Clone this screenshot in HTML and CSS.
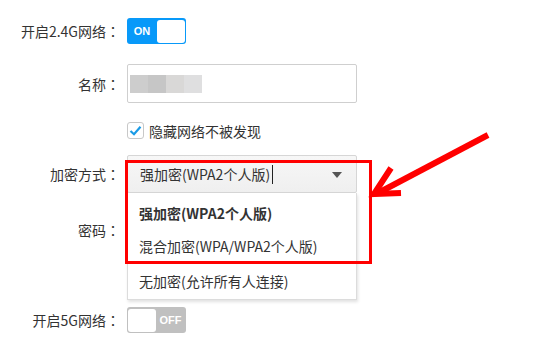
FILE: index.html
```html
<!DOCTYPE html>
<html lang="zh-CN">
<head>
    <meta charset="UTF-8">
    <meta name="viewport" content="width=device-width, initial-scale=1.0">
    <title>无线设置</title>
    <link rel="stylesheet" href="styles.css">
</head>
<body>
    <div class="page">
        <div class="form">
            <div class="row row-switch">
                <label class="label">开启2.4G网络<span class="colon" lang="zh-Hant">：</span></label>
                <span class="switch on"><span class="switch-text">ON</span><span class="knob"></span></span>
            </div>

            <div class="row row-name">
                <label class="label">名称<span class="colon" lang="zh-Hant">：</span></label>
                <div class="input">
                    <span class="blur b1"></span><span class="blur b2"></span><span class="blur b3"></span><span class="blur b4"></span>
                </div>
            </div>

            <div class="row row-check">
                <span class="label"></span>
                <span class="checkbox">
                    <svg width="13" height="11" viewBox="0 0 13 11"><path d="M1.5 6 L5 9.2 L11.5 1.8" fill="none" stroke="#1a9be6" stroke-width="2.2"/></svg>
                </span>
                <span class="check-text">隐藏网络不被发现</span>
            </div>

            <div class="row row-select">
                <label class="label">加密方式<span class="colon" lang="zh-Hant">：</span></label>
                <div class="select">
                    <span class="select-text">强加密(WPA2个人版)</span><span class="caret"></span>
                    <span class="triangle"></span>
                    <ul class="dropdown">
                        <li class="item selected i1">强加密(WPA2个人版)</li>
                        <li class="item i2">混合加密(WPA/WPA2个人版)</li>
                        <li class="item i3">无加密(允许所有人连接)</li>
                    </ul>
                </div>
            </div>

            <div class="row row-pass">
                <label class="label">密码<span class="colon" lang="zh-Hant">：</span></label>
            </div>

            <div class="row row-switch row-5g">
                <label class="label">开启5G网络<span class="colon" lang="zh-Hant">：</span></label>
                <span class="switch off"><span class="knob"></span><span class="switch-text">OFF</span></span>
            </div>
        </div>

        <!-- annotation -->
        <div class="mark-box"></div>
        <svg class="mark-arrow" width="535" height="343" viewBox="0 0 535 343">
            <path d="M488 135 L378 193" stroke="#ff0000" stroke-width="6" fill="none"/>
            <path d="M391 168 L374 194 L401 193" stroke="#ff0000" stroke-width="6" fill="none" stroke-linejoin="miter"/>
        </svg>
    </div>
</body>
</html>
```

FILE: styles.css
```css
* {
    margin: 0;
    padding: 0;
    box-sizing: border-box;
}

body {
    font-family: "Noto Sans CJK SC", "Noto Sans", sans-serif;
    font-size: 14px;
    color: #333;
    background: #fff;
}

.page {
    position: relative;
    width: 535px;
    height: 343px;
    overflow: hidden;
}

.form {
    padding-top: 18px;
}

.row {
    display: flex;
    align-items: center;
}

.label {
    width: 127px;
    padding-right: 7px;
    text-align: right;
    flex-shrink: 0;
}

.colon {
    font-family: "Noto Sans CJK TC", sans-serif;
}

.row-switch {
    height: 26px;
}

.row-name {
    margin-top: 20px;
    height: 39px;
}

.row-check {
    margin-top: 19px;
    height: 17px;
}

.row-select {
    margin-top: 16px;
    height: 38px;
}

.row-pass {
    margin-top: 18px;
    height: 38px;
}

.row-5g {
    margin-top: 58px;
    height: 26px;
}

/* switch */
.switch {
    display: flex;
    align-items: center;
    width: 59px;
    height: 26px;
    border-radius: 3px;
    padding: 1px;
}

.switch.on {
    background: #0899f9;
}

.switch.off {
    background: #c0c0c0;
}

.switch .knob {
    width: 28px;
    height: 23px;
    background: #fff;
    border-radius: 3px;
}

.switch-text {
    flex: 1;
    text-align: center;
    color: #fff;
    font-family: "Liberation Sans", Arial, sans-serif;
    font-weight: bold;
    font-size: 11px;
}

.switch.on .switch-text {
    padding-right: 1px;
}

/* text input */
.input {
    display: flex;
    align-items: center;
    width: 230px;
    height: 39px;
    border: 1px solid #cfcfcf;
    border-radius: 2px;
    padding-left: 2px;
    background: #fff;
}

.blur {
    width: 18px;
    height: 18px;
}

.b1 { background: #cdcdcd; }
.b2 { background: #c6c6c6; }
.b3 { background: #d9d8d7; }
.b4 { background: #dfdfe0; }

/* checkbox */
.checkbox {
    display: flex;
    align-items: center;
    justify-content: center;
    width: 17px;
    height: 17px;
    border: 1px solid #c8c8c8;
    border-radius: 3px;
    background: #fff;
}

.check-text {
    margin-left: 5px;
}

/* select */
.select {
    position: relative;
    display: flex;
    align-items: center;
    width: 230px;
    height: 38px;
    border: 1px solid #d6d6d6;
    border-radius: 2px;
    background: linear-gradient(#f7f7f7, #efefef);
    padding-left: 12px;
}

.caret {
    display: inline-block;
    width: 1px;
    height: 19px;
    margin-left: 2px;
    background: #222;
}

.triangle {
    position: absolute;
    right: 14px;
    top: 16px;
    width: 0;
    height: 0;
    border-left: 5px solid transparent;
    border-right: 5px solid transparent;
    border-top: 6px solid #555;
}

.dropdown {
    position: absolute;
    left: -1px;
    top: 37px;
    width: 230px;
    list-style: none;
    background: #fff;
    border: 1px solid #dcdcdc;
    border-top: none;
    box-shadow: 1px 2px 3px rgba(0, 0, 0, 0.12);
    padding-top: 3px;
    z-index: 2;
}

.item {
    display: flex;
    align-items: center;
    padding-left: 11px;
}

.item.selected {
    font-weight: bold;
}

.i1 { height: 34px; }
.i2 { height: 32px; }
.i3 { height: 37px; }

/* annotation */
.mark-box {
    position: absolute;
    left: 125px;
    top: 160px;
    width: 247px;
    height: 104px;
    border: 3px solid #ff0000;
    z-index: 3;
}

.mark-arrow {
    position: absolute;
    left: 0;
    top: 0;
    z-index: 4;
}
```
